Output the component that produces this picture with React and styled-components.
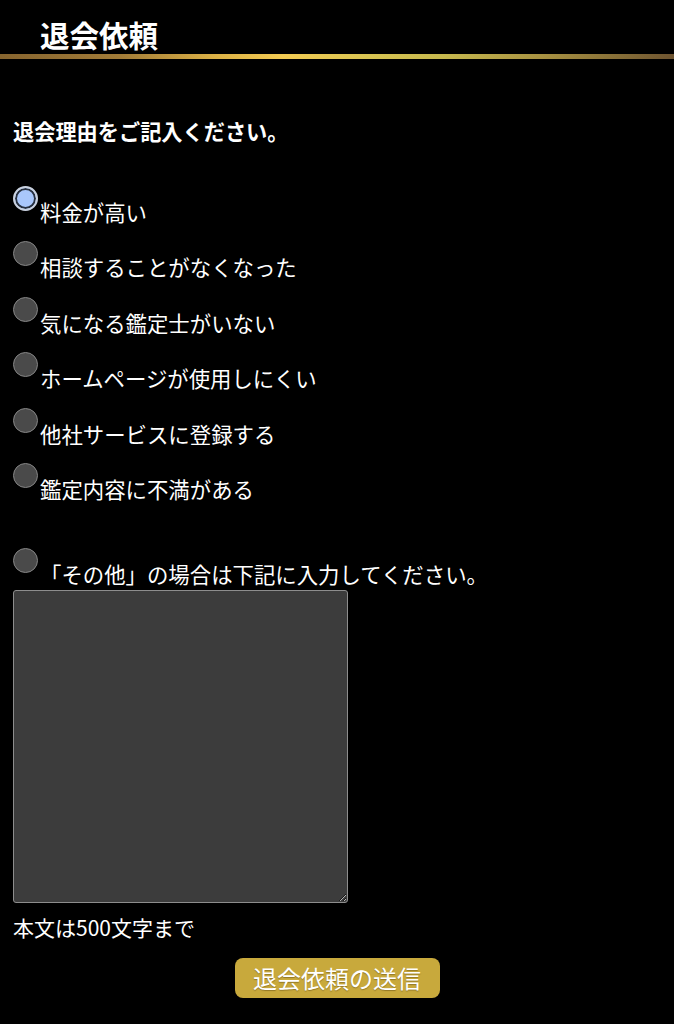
import React, { useState } from "react";
import styled, { createGlobalStyle } from "styled-components";

const Global = createGlobalStyle`
  html, body { margin: 0; padding: 0; background: #000; }
  body { font-family: "Noto Sans CJK JP", "Noto Sans", sans-serif; color: #fff; }
  * { box-sizing: border-box; }
`;

const Page = styled.div`
  background: #000;
  min-height: 1024px;
  display: flex;
  flex-direction: column;
`;

const Header = styled.header`
  padding: 16px 0 0 40px;
`;

const Title = styled.h1`
  margin: 0;
  font-size: 29.5px;
  line-height: 37px;
  font-weight: 700;
  color: #fff;
`;

const GoldRule = styled.div`
  margin-top: 1px;
  height: 5px;
  background: linear-gradient(
    90deg,
    #86642f 0%,
    #a27c38 18%,
    #dcb146 32%,
    #f3cb52 42%,
    #d8c452 55%,
    #c6b84e 66%,
    #a99342 80%,
    #6e5430 100%
  );
`;

const Form = styled.form`
  padding: 58px 0 0 13px;
  display: flex;
  flex-direction: column;
`;

const Lead = styled.p`
  margin: 0;
  font-size: 21.2px;
  line-height: 28px;
  font-weight: 700;
`;

const Options = styled.div`
  margin-top: 41px;
  display: flex;
  flex-direction: column;
  gap: 14.4px;
`;

const OptionRow = styled.label`
  display: flex;
  align-items: flex-start;
  gap: 2px;
  margin-top: ${(p) => p.$offset || 0}px;
`;

const Radio = styled.input.attrs({ type: "radio" })`
  appearance: none;
  -webkit-appearance: none;
  margin: 0;
  flex: none;
  width: 25px;
  height: 25px;
  border-radius: 50%;
  background: #4a4a4a;
  border: 1.5px solid #858585;
  &:checked {
    background: #a9c7fb;
    border: 2px solid #c9d1df;
    box-shadow: inset 0 0 0 2px #27303f;
  }
`;

const OptionText = styled.span`
  margin-top: 11px;
  font-size: 21.4px;
  line-height: 30px;
  color: #fff;
`;

const TextArea = styled.textarea`
  margin-top: 1px;
  width: 335px;
  height: 313px;
  background: #3c3c3c;
  border: 1px solid #8d8d8d;
  border-radius: 3px;
  color: #fff;
  font-family: inherit;
  font-size: 18px;
  padding: 6px;
  outline: none;
`;

const Note = styled.p`
  margin: 10px 0 0;
  font-size: 21px;
  line-height: 28px;
  color: #fff;
`;

const SubmitRow = styled.div`
  margin-top: 17px;
  display: flex;
  justify-content: center;
  padding-right: 13px;
`;

const Submit = styled.button`
  width: 205px;
  height: 40px;
  border: none;
  border-radius: 8px;
  background: #c8a93c;
  color: #fff;
  font-family: inherit;
  font-size: 24px;
  line-height: 40px;
  padding: 0;
  text-shadow: 0 1px 1px rgba(80, 60, 10, 0.45);
`;

const reasons = [
  "料金が高い",
  "相談することがなくなった",
  "気になる鑑定士がいない",
  "ホームページが使用しにくい",
  "他社サービスに登録する",
  "鑑定内容に不満がある",
];

export default function App() {
  const [value, setValue] = useState(0);
  return (
    <Page>
      <Global />
      <Header>
        <Title>退会依頼</Title>
      </Header>
      <GoldRule />
      <Form onSubmit={(e) => e.preventDefault()}>
        <Lead>退会理由をご記入ください。</Lead>
        <Options>
          {reasons.map((r, i) => (
            <OptionRow key={r}>
              <Radio name="reason" checked={value === i} onChange={() => setValue(i)} />
              <OptionText>{r}</OptionText>
            </OptionRow>
          ))}
          <OptionRow $offset={29.6}>
            <Radio name="reason" checked={value === 99} onChange={() => setValue(99)} />
            <OptionText>「その他」の場合は下記に入力してください。</OptionText>
          </OptionRow>
        </Options>
        <TextArea />
        <Note>本文は500文字まで</Note>
        <SubmitRow>
          <Submit type="submit">退会依頼の送信</Submit>
        </SubmitRow>
      </Form>
    </Page>
  );
}
